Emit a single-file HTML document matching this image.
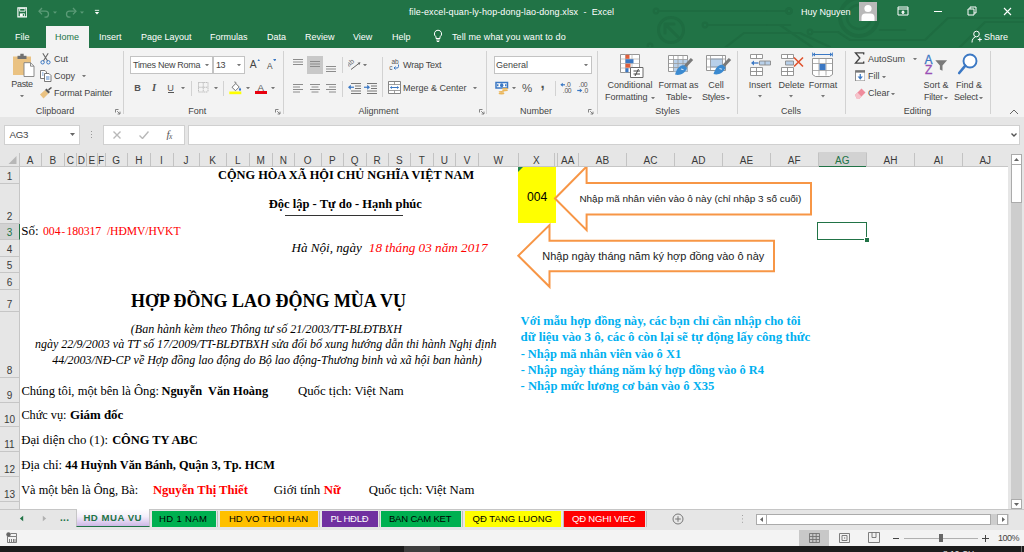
<!DOCTYPE html>
<html><head><meta charset="utf-8"><title>Excel</title>
<style>
html,body{margin:0;padding:0;}
body{width:1024px;height:552px;overflow:hidden;position:relative;background:#e6e6e6;font-family:"Liberation Sans",sans-serif;font-size:9px;color:#444;}
.a{position:absolute;}
.t{position:absolute;white-space:nowrap;line-height:1;}
.ui{font-family:"Liberation Sans",sans-serif;font-size:9px;color:#444;}
.w{color:#fff;}
.b{font-weight:bold;}
.i{font-style:italic;}
.ch{position:absolute;top:151px;height:16px;line-height:19.6px;text-align:center;font-size:10px;color:#444;font-family:"Liberation Sans",sans-serif;}
.cl{position:absolute;top:152.5px;height:14px;width:1px;background:#c3c3c3;}
.rh{position:absolute;left:0;width:19.5px;text-align:center;font-size:10px;color:#3a3a3a;border-bottom:1px solid #c6c6c6;box-sizing:border-box;}
.rh span{position:absolute;left:0;width:19px;bottom:-0.3px;line-height:12px;}
</style></head><body>

<!-- TITLE BAR -->
<div class="a" id="titlebar" style="left:0;top:0;width:1024px;height:47.500px;background:#217346;overflow:hidden;">
<svg class="a" style="left:0;top:0" width="1024" height="47" viewBox="0 0 1024 47">
 <g fill="none" stroke="#1e6c41" stroke-width="2.2" stroke-linecap="round" stroke-linejoin="round">
  <circle cx="656" cy="11" r="2.3"/><path d="M659 11H786"/><circle cx="789" cy="11" r="2.6"/>
  <circle cx="671" cy="30" r="12.5" stroke-width="3"/><path d="M678 37L665 24M665 33V24H674" stroke-width="3"/>
  <circle cx="705" cy="25" r="2.3"/><path d="M708 25H780L812 47"/>
  <path d="M722 50L744 33H800L830 47"/><circle cx="810" cy="32" r="2.3"/>
  <circle cx="650" cy="46" r="2.3"/>
  <circle cx="859" cy="17" r="19" stroke-width="4"/><circle cx="859" cy="17" r="12" stroke-width="2.5"/>
  <path d="M768 11H786"/><path d="M768 25H790"/><circle cx="789" cy="11" r="2.6"/>
  <path d="M812 32H838L850 40H925L948 18H1024"/>
  <path d="M960 47L985 22H1024"/>
  <path d="M880 30H905"/>
 </g>
</svg>
<!-- QAT -->
<svg class="a" style="left:16.500px;top:7.200px" width="10.700" height="10.700" viewBox="0 0 12 12"><path d="M1 1h10v10H1z" fill="none" stroke="#fff" stroke-width="1.3"/><path d="M3 1.5h6v3.2H3z" fill="none" stroke="#fff" stroke-width="1"/><path d="M3.2 7.2h5.6v3.5H3.2z" fill="#fff"/><path d="M6.5 8h1.4v2H6.500z" fill="#217346"/></svg>
<svg class="a" style="left:37px;top:6px" width="50" height="12" viewBox="0 0 50 12"><g fill="none" stroke="#5b9b77" stroke-width="1.3"><path d="M2 5.200h6.500a3 3 0 0 1 0 6H7.500"/><path d="M5 2L2 5.200L5 8.400"/><path d="M39 5.200h-6.500a3 3 0 0 0 0 6H33.500"/><path d="M36 2L39 5.200L36 8.400"/></g><path d="M16 5.500h4l-2 2.200z" fill="#5b9b77"/><path d="M43 5.500h4l-2 2.200z" fill="#5b9b77"/></svg>
<svg class="a" style="left:94.300px;top:9.200px" width="6" height="7" viewBox="0 0 7 8"><path d="M1 1.500h5" stroke="#fff" stroke-width="1"/><path d="M1 3.500h5L3.500 6.300z" fill="#fff"/></svg>
<div class="t w" style="left:409px;top:7.600px;font-size:9px;letter-spacing:0.1px;">file-excel-quan-ly-hop-dong-lao-dong.xlsx&nbsp; -&nbsp; Excel</div>
<div class="t w" style="left:801px;top:7.600px;font-size:9px;">Huy Nguyen</div>
<div class="a" style="left:859px;top:2px;width:18px;height:19px;background:#b9b9b9;overflow:hidden;"><svg width="18" height="19" viewBox="0 0 18 19"><circle cx="9" cy="6.500" r="3.600" fill="#fff"/><path d="M2.500 19v-3.500a4 4 0 0 1 4-4h5a4 4 0 0 1 4 4V19z" fill="#fff"/></svg></div>
<!-- window buttons -->
<svg class="a" style="left:897px;top:6px" width="12" height="10" viewBox="0 0 12 10"><path d="M1 1h10v8H1z" fill="none" stroke="#fff" stroke-width="1"/><path d="M1 3h10" stroke="#fff"/><path d="M6 4.300L8.200 6.500H6.800V8H5.200V6.500H3.800z" fill="#fff"/></svg>
<div class="a" style="left:934px;top:11px;width:8px;height:1px;background:#fff;"></div>
<svg class="a" style="left:967px;top:6px" width="10" height="10" viewBox="0 0 10 10"><path d="M1 3h6v6H1z" fill="none" stroke="#fff" stroke-width="1"/><path d="M3 3V1h6v6H7" fill="none" stroke="#fff" stroke-width="1"/></svg>
<svg class="a" style="left:1003px;top:7px" width="9" height="9" viewBox="0 0 9 9"><path d="M1 1l7 7M8 1l-7 7" stroke="#fff" stroke-width="1.100"/></svg>
<!-- tabs -->
<div class="a" style="left:46px;top:25.500px;width:43px;height:22.500px;background:#f3f3f3;"></div>
<div class="t w" style="left:15px;top:32.600px;font-size:9px;">File</div>
<div class="t" style="left:55px;top:32.600px;font-size:9px;color:#217346;">Home</div>
<div class="t w" style="left:99px;top:32.600px;font-size:9px;">Insert</div>
<div class="t w" style="left:141px;top:32.600px;font-size:9px;">Page Layout</div>
<div class="t w" style="left:210px;top:32.600px;font-size:9px;">Formulas</div>
<div class="t w" style="left:267px;top:32.600px;font-size:9px;">Data</div>
<div class="t w" style="left:305px;top:32.600px;font-size:9px;">Review</div>
<div class="t w" style="left:353px;top:32.600px;font-size:9px;">View</div>
<div class="t w" style="left:392px;top:32.600px;font-size:9px;">Help</div>
<svg class="a" style="left:433px;top:29px" width="10" height="14" viewBox="0 0 10 14"><path d="M5 1.200a3.600 3.600 0 0 1 2 6.600v1.700H3V7.800a3.600 3.600 0 0 1 2-6.600z" fill="none" stroke="#fff" stroke-width="1"/><path d="M3.300 11h3.400M3.800 12.500h2.400" stroke="#fff" stroke-width="1"/></svg>
<div class="t w" style="left:452px;top:32.600px;font-size:9px;letter-spacing:0.1px;">Tell me what you want to do</div>
<svg class="a" style="left:971px;top:30px" width="12" height="13" viewBox="0 0 12 13"><circle cx="5.500" cy="4" r="2.800" fill="none" stroke="#fff" stroke-width="1"/><path d="M1 12.500c0-3.500 1.700-5 3.300-5.400" fill="none" stroke="#fff" stroke-width="1"/><path d="M8.800 7.500v4M6.800 9.500h4" stroke="#fff" stroke-width="1"/></svg>
<div class="t w" style="left:984px;top:32.600px;font-size:9px;">Share</div>
</div>

<!-- RIBBON -->
<div class="a" id="ribbon" style="left:0;top:47.500px;width:1024px;height:70px;background:#f3f3f3;border-bottom:1px solid #d5d5d5;box-sizing:border-box;"></div>
<!--RIBBON-->
<svg class="a" style="left:12px;top:53px" width="24" height="26" viewBox="0 0 24 26">
<path d="M1 3.500h18v18.500h-18z" fill="#eac282"/>
<path d="M5.500 2.800h9v3.200h-9z" fill="#707070"/><path d="M8.300 0.800h3.400v2.500h-3.400z" fill="#707070"/>
<path d="M12 9.700h6.500l3.500 3.500v10.300h-10z" fill="#fff" stroke="#808080" stroke-width="0.900"/><path d="M18.500 9.700v3.500h3.500" fill="none" stroke="#808080" stroke-width="0.900"/>
</svg>
<div class="t ui" style="left:-28px;width:100px;text-align:center;top:80.40px;letter-spacing:-0.35px;">Paste</div>
<svg class="a" style="left:19.50px;top:95.10px" width="4" height="2.400" viewBox="0 0 4 2.400"><path d="M0 0h4L2 2.400z" fill="#777"/></svg>
<svg class="a" style="left:40px;top:53px" width="11" height="12" viewBox="0 0 11 12"><path d="M2.800 0.300L7.600 8M8.200 0.300L3.400 8" stroke="#666" stroke-width="1.100" fill="none"/><circle cx="2.600" cy="9.300" r="1.700" fill="none" stroke="#3b78c4" stroke-width="1"/><circle cx="8.400" cy="9.300" r="1.700" fill="none" stroke="#3b78c4" stroke-width="1"/></svg>
<div class="t ui" style="left:54px;top:54.90px;">Cut</div>
<svg class="a" style="left:40px;top:70px" width="12" height="12" viewBox="0 0 12 12"><path d="M0.500 0.500h4.500l1.500 1.500v6.500h-6z" fill="#fff" stroke="#6a6a6a" stroke-width="0.900"/><path d="M4.500 3.500h4.500l2 2v6h-6.500z" fill="#fff" stroke="#6a6a6a" stroke-width="0.900"/><path d="M6 7h3.500M6 9h3.500" stroke="#3b78c4" stroke-width="0.900"/><path d="M2 3h1.500M2 5h1.500" stroke="#3b78c4" stroke-width="0.800"/></svg>
<div class="t ui" style="left:54px;top:71.90px;">Copy</div>
<svg class="a" style="left:82.30px;top:75.10px" width="4" height="2.400" viewBox="0 0 4 2.400"><path d="M0 0h4L2 2.400z" fill="#777"/></svg>
<svg class="a" style="left:39px;top:87px" width="14" height="12" viewBox="0 0 14 12"><path d="M1 7.500L6 3l3.500 3.500-5 5z" fill="#eac282"/><path d="M6 3l1.500-1.500l3.500 3.500L9.500 6.500z" fill="#555"/><path d="M9.500 2.800L12.500 0.500" stroke="#555" stroke-width="1.500"/></svg>
<div class="t ui" style="left:54px;top:88.90px;letter-spacing:-0.1px;">Format Painter</div>
<div class="t ui" style="left:5px;width:100px;text-align:center;top:106.70px;">Clipboard</div>
<svg class="a" style="left:115px;top:108.5px" width="6" height="6" viewBox="0 0 6 6"><path d="M0.500 3.500V0.500H3.500" fill="none" stroke="#777" stroke-width="0.900"/><path d="M2.200 2.200L5 5M5 2.600V5H2.600" fill="none" stroke="#777" stroke-width="0.900"/></svg>
<div class="a" style="left:123.2px;top:51px;width:1px;height:63px;background:#d2d2d2;"></div>
<div class="a" style="left:130px;top:56.200px;width:82.500px;height:17.400px;background:#fff;border:1px solid #c3c3c3;box-sizing:border-box;"></div>
<div class="a" style="left:213px;top:56.200px;width:31.500px;height:17.400px;background:#fff;border:1px solid #c3c3c3;box-sizing:border-box;"></div>
<div class="t ui" style="left:133px;top:61.30px;letter-spacing:-0.28px;">Times New Roma</div>
<svg class="a" style="left:205.00px;top:63.60px" width="4" height="2.400" viewBox="0 0 4 2.400"><path d="M0 0h4L2 2.400z" fill="#777"/></svg>
<div class="t ui" style="left:216px;top:61.30px;letter-spacing:-0.5px;">13</div>
<svg class="a" style="left:237.40px;top:63.60px" width="4" height="2.400" viewBox="0 0 4 2.400"><path d="M0 0h4L2 2.400z" fill="#777"/></svg>
<div class="t ui" style="left:249.800px;top:59.800px;font-size:10.300px;">A</div><svg class="a" style="left:256.500px;top:58.500px" width="3.500" height="2.500" viewBox="0 0 4 3"><path d="M0 3h4L2 0z" fill="#3b78c4"/></svg>
<div class="t ui" style="left:267px;top:61.500px;font-size:8.300px;">A</div><svg class="a" style="left:272.800px;top:58.800px" width="3.500" height="2.500" viewBox="0 0 4 3"><path d="M0 0h4L2 3z" fill="#3b78c4"/></svg>
<div class="t ui b" style="left:134.300px;top:83.600px;font-size:9.200px;color:#555;">B</div>
<div class="t i" style="left:152px;top:83px;font-family:'Liberation Serif',serif;font-size:10.500px;color:#555;font-weight:bold;">I</div>
<div class="t ui" style="left:167.300px;top:83.600px;font-size:9.200px;color:#555;">U</div><div class="a" style="left:167.500px;top:91.800px;width:6px;height:1px;background:#555;"></div>
<svg class="a" style="left:181.20px;top:86.60px" width="4" height="2.400" viewBox="0 0 4 2.400"><path d="M0 0h4L2 2.400z" fill="#777"/></svg>
<div class="a" style="left:191px;top:80.5px;width:1px;height:15.299999999999997px;background:#d2d2d2;"></div>
<svg class="a" style="left:198px;top:82px" width="11" height="11" viewBox="0 0 11 11"><path d="M0.500 0.500h9.500M0.500 5.250h9.500M0.500 10h9.500M0.500 0.500v9.500M5.250 0.500v9.500M10 0.500v9.500" fill="none" stroke="#b0b0b0" stroke-width="0.900" stroke-dasharray="1.200 0.700"/></svg>
<svg class="a" style="left:213.60px;top:86.60px" width="4" height="2.400" viewBox="0 0 4 2.400"><path d="M0 0h4L2 2.400z" fill="#777"/></svg>
<div class="a" style="left:223px;top:80.5px;width:1px;height:15.299999999999997px;background:#d2d2d2;"></div>
<svg class="a" style="left:229px;top:80.500px" width="13" height="14" viewBox="0 0 13 14"><path d="M3 6.300L6.800 2.500L10.200 6L6.500 9.700z" fill="#fff" stroke="#666" stroke-width="0.900"/><path d="M5.300 1.200c0.800-0.800 1.800 0 1.500 1.300" stroke="#666" stroke-width="0.900" fill="none"/><path d="M11 6.500c0.800 1.200 1.100 1.700 1.100 2.200a1.100 1.100 0 0 1-2.200 0c0-0.500 0.300-1 1.100-2.200z" fill="#3b78c4"/><path d="M0.300 10.500h12v2.700h-12z" fill="#ffff00"/></svg>
<svg class="a" style="left:245.70px;top:86.60px" width="4" height="2.400" viewBox="0 0 4 2.400"><path d="M0 0h4L2 2.400z" fill="#777"/></svg>
<div class="t ui" style="left:257.500px;top:82.500px;font-size:9.700px;color:#555;">A</div><div class="a" style="left:255px;top:91px;width:12px;height:2.700px;background:#e8000e;"></div>
<svg class="a" style="left:271.20px;top:86.60px" width="4" height="2.400" viewBox="0 0 4 2.400"><path d="M0 0h4L2 2.400z" fill="#777"/></svg>
<div class="t ui" style="left:147.3px;width:100px;text-align:center;top:106.70px;">Font</div>
<svg class="a" style="left:275px;top:108.5px" width="6" height="6" viewBox="0 0 6 6"><path d="M0.500 3.500V0.500H3.500" fill="none" stroke="#777" stroke-width="0.900"/><path d="M2.200 2.200L5 5M5 2.600V5H2.600" fill="none" stroke="#777" stroke-width="0.900"/></svg>
<div class="a" style="left:283.2px;top:51px;width:1px;height:63px;background:#d2d2d2;"></div>
<svg class="a" style="left:293px;top:58.5px" width="10" height="8.5" viewBox="0 0 10 8.5"><path d="M0 0.5H10" stroke="#8c8c8c" stroke-width="1"/><path d="M0 3.0H10" stroke="#8c8c8c" stroke-width="1"/><path d="M0 5.5H10" stroke="#8c8c8c" stroke-width="1"/></svg>
<div class="a" style="left:306.500px;top:56px;width:16.500px;height:17.500px;background:#c8c8c8;"></div>
<svg class="a" style="left:310px;top:61px" width="10" height="8.5" viewBox="0 0 10 8.5"><path d="M0 0.5H10" stroke="#8c8c8c" stroke-width="1"/><path d="M0 3.0H10" stroke="#8c8c8c" stroke-width="1"/><path d="M0 5.5H10" stroke="#8c8c8c" stroke-width="1"/></svg>
<svg class="a" style="left:326px;top:65.5px" width="10" height="8.5" viewBox="0 0 10 8.5"><path d="M0 0.5H10" stroke="#8c8c8c" stroke-width="1"/><path d="M0 3.0H10" stroke="#8c8c8c" stroke-width="1"/><path d="M0 5.5H10" stroke="#8c8c8c" stroke-width="1"/></svg>
<div class="a" style="left:342px;top:57px;width:1px;height:16px;background:#d2d2d2;"></div>
<svg class="a" style="left:348px;top:58px" width="14" height="13" viewBox="0 0 14 13"><text x="0" y="7" font-family="Liberation Sans" font-size="7" fill="#666" transform="rotate(-40 3 7)">ab</text><path d="M3 11.500L11.500 5" stroke="#666" stroke-width="1"/><path d="M12.500 4.200l-3 0.500l1.800 2.200z" fill="#666"/></svg>
<svg class="a" style="left:363.00px;top:63.60px" width="4" height="2.400" viewBox="0 0 4 2.400"><path d="M0 0h4L2 2.400z" fill="#777"/></svg>
<div class="a" style="left:382px;top:57px;width:1px;height:40px;background:#d2d2d2;"></div>
<svg class="a" style="left:389px;top:58px" width="11" height="13" viewBox="0 0 11 13"><text x="2.500" y="5.500" font-family="Liberation Sans" font-size="6.500" fill="#555">ab</text><text x="0.300" y="11.500" font-family="Liberation Sans" font-size="6.500" fill="#555">c</text><path d="M9.500 6.500v2a1.500 1.500 0 0 1-1.500 1.500H5.500" fill="none" stroke="#3b78c4" stroke-width="1"/><path d="M6.500 8.500L5 10l1.500 1.500" fill="none" stroke="#3b78c4" stroke-width="1"/></svg>
<div class="t ui" style="left:403px;top:61.20px;letter-spacing:-0.2px;">Wrap Text</div>
<svg class="a" style="left:293px;top:83.5px" width="10" height="11.0" viewBox="0 0 10 11.0"><path d="M0 0.5H10" stroke="#8c8c8c" stroke-width="1"/><path d="M0 3.0H7" stroke="#8c8c8c" stroke-width="1"/><path d="M0 5.5H10" stroke="#8c8c8c" stroke-width="1"/><path d="M0 8.0H7" stroke="#8c8c8c" stroke-width="1"/></svg>
<svg class="a" style="left:310px;top:83.5px" width="10" height="11.0" viewBox="0 0 10 11.0"><path d="M0 0.5H10" stroke="#8c8c8c" stroke-width="1"/><path d="M1.5 3.0H8.5" stroke="#8c8c8c" stroke-width="1"/><path d="M0 5.5H10" stroke="#8c8c8c" stroke-width="1"/><path d="M1.5 8.0H8.5" stroke="#8c8c8c" stroke-width="1"/></svg>
<svg class="a" style="left:326px;top:83.5px" width="10" height="11.0" viewBox="0 0 10 11.0"><path d="M0 0.5H10" stroke="#8c8c8c" stroke-width="1"/><path d="M3 3.0H10" stroke="#8c8c8c" stroke-width="1"/><path d="M0 5.5H10" stroke="#8c8c8c" stroke-width="1"/><path d="M3 8.0H10" stroke="#8c8c8c" stroke-width="1"/></svg>
<div class="a" style="left:342px;top:81px;width:1px;height:16px;background:#d2d2d2;"></div>
<svg class="a" style="left:348px;top:82px" width="13" height="12" viewBox="0 0 13 12"><path d="M3 1.500h10M7 4h6M7 6.500h6M3 9h10M3 11.500h10" stroke="#777" stroke-width="1" fill="none"/><path d="M1 5.250h5" stroke="#3b78c4" stroke-width="1.200"/><path d="M0 5.250L2.800 2.800v4.900z" fill="#3b78c4"/></svg>
<svg class="a" style="left:364px;top:82px" width="13" height="12" viewBox="0 0 13 12"><path d="M3 1.500h10M7 4h6M7 6.500h6M3 9h10M3 11.500h10" stroke="#777" stroke-width="1" fill="none"/><path d="M0 5.250h5" stroke="#3b78c4" stroke-width="1.200"/><path d="M6 5.250L3.200 2.800v4.900z" fill="#3b78c4"/></svg>
<svg class="a" style="left:388px;top:81px" width="13" height="13" viewBox="0 0 13 13"><path d="M0.500 0.500h12v12h-12z" fill="#fff" stroke="#777" stroke-width="0.900"/><path d="M0.500 3.500h12M0.500 9.500h12M6.500 0.500v3M6.500 9.500v3" stroke="#888" stroke-width="0.800"/><path d="M2.500 6.500h8" stroke="#3b78c4" stroke-width="1"/><path d="M2 6.500l2-1.600v3.200zM11 6.500l-2-1.600v3.200z" fill="#3b78c4"/></svg>
<div class="t ui" style="left:403px;top:83.90px;">Merge &amp; Center</div>
<svg class="a" style="left:473.00px;top:86.80px" width="4" height="2.400" viewBox="0 0 4 2.400"><path d="M0 0h4L2 2.400z" fill="#777"/></svg>
<div class="t ui" style="left:328.5px;width:100px;text-align:center;top:106.70px;">Alignment</div>
<svg class="a" style="left:479px;top:108.5px" width="6" height="6" viewBox="0 0 6 6"><path d="M0.500 3.500V0.500H3.500" fill="none" stroke="#777" stroke-width="0.900"/><path d="M2.200 2.200L5 5M5 2.600V5H2.600" fill="none" stroke="#777" stroke-width="0.900"/></svg>
<div class="a" style="left:486.2px;top:51px;width:1px;height:63px;background:#d2d2d2;"></div>
<div class="a" style="left:493.500px;top:56.200px;width:98px;height:17.400px;background:#fff;border:1px solid #c3c3c3;box-sizing:border-box;"></div>
<div class="t ui" style="left:496px;top:61.30px;">General</div>
<svg class="a" style="left:583.50px;top:63.60px" width="4" height="2.400" viewBox="0 0 4 2.400"><path d="M0 0h4L2 2.400z" fill="#777"/></svg>
<svg class="a" style="left:495px;top:81px" width="14" height="14" viewBox="0 0 14 14"><path d="M1 1.500h11.500v5.500h-11.500z" fill="#fff" stroke="#3b78c4" stroke-width="1.500"/><ellipse cx="6.700" cy="4.200" rx="1.700" ry="2" fill="#3b78c4"/><path d="M2 3.200h1.500v2h-1.500zM10 3.200h1.500v2h-1.500z" fill="#3b78c4"/><ellipse cx="10" cy="7.700" rx="3" ry="0.900" fill="#eab65a"/><ellipse cx="10" cy="9.300" rx="3" ry="0.900" fill="#eab65a"/><ellipse cx="6.500" cy="10.800" rx="3" ry="0.900" fill="#eab65a"/><ellipse cx="6.500" cy="12.500" rx="3" ry="0.900" fill="#eab65a"/></svg>
<svg class="a" style="left:512.00px;top:86.80px" width="4" height="2.400" viewBox="0 0 4 2.400"><path d="M0 0h4L2 2.400z" fill="#777"/></svg>
<div class="t ui" style="left:522px;top:82.500px;font-size:11.500px;color:#555;">%</div>
<div class="t ui b" style="left:540.500px;top:75px;font-size:15px;color:#555;">,</div>
<div class="a" style="left:555px;top:81px;width:1px;height:15px;background:#d2d2d2;"></div>
<svg class="a" style="left:559px;top:81px" width="14" height="14" viewBox="0 0 14 14"><path d="M2.500 3.800h3.500" stroke="#3b78c4" stroke-width="1.200"/><path d="M1.300 3.800L3.800 1.800v4z" fill="#3b78c4"/><text x="6.200" y="6.300" font-family="Liberation Sans" font-size="6.800" fill="#555">.0</text><text x="3.800" y="11.800" font-family="Liberation Sans" font-size="6.800" fill="#555" letter-spacing="-0.300">.00</text></svg>
<svg class="a" style="left:577px;top:81px" width="14" height="14" viewBox="0 0 14 14"><text x="1.800" y="6.300" font-family="Liberation Sans" font-size="6.800" fill="#555" letter-spacing="-0.300">.00</text><path d="M0.200 9.500h3.500" stroke="#3b78c4" stroke-width="1.200"/><path d="M5.300 9.500L2.800 7.500v4z" fill="#3b78c4"/><text x="5.500" y="11.800" font-family="Liberation Sans" font-size="6.800" fill="#555">.0</text></svg>
<div class="t ui" style="left:486px;width:100px;text-align:center;top:106.70px;">Number</div>
<svg class="a" style="left:588px;top:108.5px" width="6" height="6" viewBox="0 0 6 6"><path d="M0.500 3.500V0.500H3.500" fill="none" stroke="#777" stroke-width="0.900"/><path d="M2.200 2.200L5 5M5 2.600V5H2.600" fill="none" stroke="#777" stroke-width="0.900"/></svg>
<div class="a" style="left:597.2px;top:51px;width:1px;height:63px;background:#d2d2d2;"></div>
<svg class="a" style="left:620px;top:54px" width="24" height="24" viewBox="0 0 24 24"><path d="M0.500 0.500h19v18h-19z" fill="#fff" stroke="#8a8a8a" stroke-width="0.900"/><path d="M0.500 5h19M0.500 9.500h19M0.500 14h19M5.500 0.500v18M12 0.500v18" stroke="#b5b5b5" stroke-width="0.800"/><path d="M5.500 0.800h4v4h-4z" fill="#e0603c"/><path d="M5.500 5.200h8v4h-8z" fill="#3b78c4"/><path d="M5.500 9.700h5v4h-5z" fill="#e0603c"/><path d="M5.500 14.200h3v4h-3z" fill="#3b78c4"/><path d="M10.500 13.500h12.500v10h-12.500z" fill="#fff" stroke="#6a6a6a" stroke-width="1"/><path d="M13.500 17h6.500M13.500 20h6.500M18.500 15l-3.500 7" stroke="#444" stroke-width="1" fill="none"/></svg>
<div class="t ui" style="left:580px;width:100px;text-align:center;top:80.70px;">Conditional</div>
<div class="t ui" style="left:605px;top:93.00px;letter-spacing:-0.05px;">Formatting</div>
<svg class="a" style="left:651.00px;top:96.60px" width="4" height="2.400" viewBox="0 0 4 2.400"><path d="M0 0h4L2 2.400z" fill="#777"/></svg>
<svg class="a" style="left:668px;top:54px" width="26" height="24" viewBox="0 0 26 24"><path d="M0.500 1.500h19v16h-19z" fill="#fff" stroke="#8a8a8a" stroke-width="0.900"/><path d="M5.500 5.500h14v12h-14z" fill="#b8d0ea"/><path d="M0.500 5.500h19M0.500 9.500h19M0.500 13.500h19M5.500 1.500v16M10 1.500v16M15 1.500v16" stroke="#9a9a9a" stroke-width="0.800"/><path d="M24 5L17 12.500" stroke="#7a7a7a" stroke-width="3.200"/><path d="M16.500 11.500c-3.500-1.500-7.500 2-9.500 9c4 1.500 10-0.500 12-6.500z" fill="#3b8ad0"/><path d="M13 15l2.500 0.800" stroke="#cfe3f6" stroke-width="1.200"/></svg>
<div class="t ui" style="left:628.5px;width:100px;text-align:center;top:80.70px;letter-spacing:-0.05px;">Format as</div>
<div class="t ui" style="left:666px;top:93.00px;">Table</div>
<svg class="a" style="left:688.00px;top:96.60px" width="4" height="2.400" viewBox="0 0 4 2.400"><path d="M0 0h4L2 2.400z" fill="#777"/></svg>
<svg class="a" style="left:706px;top:54px" width="26" height="24" viewBox="0 0 26 24"><path d="M0.500 1.500h19v15h-19z" fill="#fff" stroke="#8a8a8a" stroke-width="0.900"/><path d="M4.500 5h12v8h-12z" fill="#b8d0ea" stroke="#8aaace" stroke-width="0.800"/><path d="M0.500 5h19M0.500 13h19M4.500 1.500v15M16.500 1.500v15" stroke="#9a9a9a" stroke-width="0.800"/><path d="M24 5L17.500 12" stroke="#7a7a7a" stroke-width="3.200"/><path d="M17 11c-3.500-1.500-7.500 2-9.500 9c4 1.500 10-0.500 12-6.500z" fill="#3b8ad0"/><path d="M13.500 14.500l2.500 0.800" stroke="#cfe3f6" stroke-width="1.200"/></svg>
<div class="t ui" style="left:666px;width:100px;text-align:center;top:80.70px;">Cell</div>
<div class="t ui" style="left:702px;top:93.00px;letter-spacing:-0.3px;">Styles</div>
<svg class="a" style="left:726.00px;top:96.60px" width="4" height="2.400" viewBox="0 0 4 2.400"><path d="M0 0h4L2 2.400z" fill="#777"/></svg>
<div class="t ui" style="left:617.5px;width:100px;text-align:center;top:106.70px;">Styles</div>
<div class="a" style="left:737.2px;top:51px;width:1px;height:63px;background:#d2d2d2;"></div>
<svg class="a" style="left:750px;top:54px" width="22" height="23" viewBox="0 0 22 23"><path d="M0.500 0.500h12v4h-12zM6.500 0.500v4" fill="#fff" stroke="#8a8a8a" stroke-width="0.900"/><path d="M0.500 13.500h12v8h-12zM6.500 13.500v8M0.500 17.500h12" fill="#fff" stroke="#8a8a8a" stroke-width="0.900"/><path d="M9.500 7h11v4h-11z" fill="#b8d0ea" stroke="#8a8a8a" stroke-width="0.900"/><path d="M15 7v4" stroke="#8a8a8a" stroke-width="0.900"/><path d="M3 9h5.500" stroke="#3b78c4" stroke-width="1.300"/><path d="M1 9l3-2.500v5z" fill="#3b78c4"/></svg>
<div class="t ui" style="left:710px;width:100px;text-align:center;top:80.70px;">Insert</div>
<svg class="a" style="left:757.50px;top:95.30px" width="4" height="2.400" viewBox="0 0 4 2.400"><path d="M0 0h4L2 2.400z" fill="#777"/></svg>
<svg class="a" style="left:781px;top:54px" width="24" height="23" viewBox="0 0 24 23"><path d="M0.500 0.500h12v4h-12zM6.500 0.500v4" fill="#fff" stroke="#8a8a8a" stroke-width="0.900"/><path d="M0.500 13.500h12v8h-12zM6.500 13.500v8M0.500 17.500h12" fill="#fff" stroke="#8a8a8a" stroke-width="0.900"/><path d="M4.500 7h8v4h-8z" fill="#b8d0ea" stroke="#8a8a8a" stroke-width="0.900"/><path d="M13 3.500l9 9M22 3.500l-9 9" stroke="#e0532e" stroke-width="1.600"/></svg>
<div class="t ui" style="left:741.5px;width:100px;text-align:center;top:80.70px;">Delete</div>
<svg class="a" style="left:789.00px;top:95.30px" width="4" height="2.400" viewBox="0 0 4 2.400"><path d="M0 0h4L2 2.400z" fill="#777"/></svg>
<svg class="a" style="left:811px;top:52px" width="24" height="26" viewBox="0 0 24 26"><path d="M2 2.500h19" stroke="#3b78c4" stroke-width="1"/><path d="M1.500 2.500l2.500-2v4zM21.500 2.500l-2.500-2v4z" fill="#3b78c4"/><path d="M1.500 0.500v4M21.500 0.500v4" stroke="#3b78c4" stroke-width="0.800"/><path d="M1.500 6.500h20v16l-3 2h-14l-3-2z" fill="#fff" stroke="#8a8a8a" stroke-width="0.900"/><path d="M8 6.500v17M15 6.500v17M1.500 11.500h20M1.500 18.500h20" stroke="#9a9a9a" stroke-width="0.800"/><path d="M8.500 12h6v6h-6z" fill="#3b78c4"/></svg>
<div class="t ui" style="left:773px;width:100px;text-align:center;top:80.70px;">Format</div>
<svg class="a" style="left:821.00px;top:95.30px" width="4" height="2.400" viewBox="0 0 4 2.400"><path d="M0 0h4L2 2.400z" fill="#777"/></svg>
<div class="t ui" style="left:741px;width:100px;text-align:center;top:106.70px;">Cells</div>
<div class="a" style="left:845.2px;top:51px;width:1px;height:63px;background:#d2d2d2;"></div>
<svg class="a" style="left:853.800px;top:52.300px" width="10.800" height="12" viewBox="0 0 12 14"><path d="M11 3V1H1.500l5 6l-5 6H11v-2" fill="none" stroke="#444" stroke-width="1.600"/></svg>
<div class="t ui" style="left:868px;top:54.90px;">AutoSum</div>
<svg class="a" style="left:913.00px;top:58.10px" width="4" height="2.400" viewBox="0 0 4 2.400"><path d="M0 0h4L2 2.400z" fill="#777"/></svg>
<svg class="a" style="left:854.500px;top:70px" width="10.500" height="11.400" viewBox="0 0 12 13"><path d="M0.500 0.500h11v12h-11z" fill="#fff" stroke="#777" stroke-width="1"/><path d="M0.500 1h11v2h-11z" fill="#777"/><path d="M6 4.500v5" stroke="#3b78c4" stroke-width="1.400"/><path d="M6 11L3 7.500h6z" fill="#3b78c4"/></svg>
<div class="t ui" style="left:868px;top:71.90px;">Fill</div>
<svg class="a" style="left:882.00px;top:75.80px" width="4" height="2.400" viewBox="0 0 4 2.400"><path d="M0 0h4L2 2.400z" fill="#777"/></svg>
<svg class="a" style="left:854px;top:87px" width="13" height="12" viewBox="0 0 13 12"><path d="M1 8l6.500-6.500l4 4L5 12H3z" fill="#ef8b9c"/><path d="M1 8l2.500-2.500l4 4L5 12H3z" fill="#f6c3cb"/></svg>
<div class="t ui" style="left:868px;top:88.90px;">Clear</div>
<svg class="a" style="left:891.00px;top:92.80px" width="4" height="2.400" viewBox="0 0 4 2.400"><path d="M0 0h4L2 2.400z" fill="#777"/></svg>
<svg class="a" style="left:924px;top:53px" width="26" height="25" viewBox="0 0 26 25"><text x="0.500" y="10.700" font-family="Liberation Sans" font-size="12" fill="#3b78c4" stroke="#3b78c4" stroke-width="0.300">A</text><text x="1" y="21" font-family="Liberation Sans" font-size="12" fill="#9a4fb5" stroke="#9a4fb5" stroke-width="0.300">Z</text><path d="M11.300 7.200h11.800l-4.600 5.300v5.300l-2.600-1.300v-4z" fill="#7a7a7a"/></svg>
<div class="t ui" style="left:886px;width:100px;text-align:center;top:80.70px;">Sort &amp;</div>
<div class="t ui" style="left:924px;top:93.00px;letter-spacing:-0.2px;">Filter</div>
<svg class="a" style="left:944.00px;top:96.60px" width="4" height="2.400" viewBox="0 0 4 2.400"><path d="M0 0h4L2 2.400z" fill="#777"/></svg>
<svg class="a" style="left:957px;top:53px" width="26" height="25" viewBox="0 0 26 25"><circle cx="13" cy="8" r="6.500" fill="#fff" stroke="#3b78c4" stroke-width="1.900"/><path d="M8.300 12.700L2.200 20" stroke="#3b78c4" stroke-width="2.600" stroke-linecap="round"/></svg>
<div class="t ui" style="left:919px;width:100px;text-align:center;top:80.70px;">Find &amp;</div>
<div class="t ui" style="left:954px;top:93.00px;letter-spacing:-0.2px;">Select</div>
<svg class="a" style="left:978.50px;top:96.60px" width="4" height="2.400" viewBox="0 0 4 2.400"><path d="M0 0h4L2 2.400z" fill="#777"/></svg>
<div class="t ui" style="left:867.5px;width:100px;text-align:center;top:106.70px;">Editing</div>
<div class="a" style="left:990px;top:51px;width:1px;height:63px;background:#d2d2d2;"></div>
<svg class="a" style="left:1009px;top:109px" width="10" height="6" viewBox="0 0 10 6"><path d="M1 5L5 1l4 4" fill="none" stroke="#666" stroke-width="1"/></svg>
<!--/RIBBON-->

<!-- FORMULA BAR -->
<div class="a" id="fbar" style="left:0;top:117px;width:1024px;height:34px;background:#e6e6e6;"></div>
<div class="a" style="left:4px;top:125px;width:76px;height:19.500px;background:#fff;border:1px solid #d0d0d0;box-sizing:border-box;"></div>
<div class="t ui" style="left:9.500px;top:130px;font-size:9.700px;letter-spacing:-0.2px;">AG3</div>
<svg class="a" style="left:69.500px;top:133px" width="5" height="3" viewBox="0 0 5 3"><path d="M0 0h5L2.500 3z" fill="#666"/></svg>
<div class="a" style="left:91px;top:131.200px;width:1px;height:1px;background:#999;box-shadow:0 3px 0 #999,0 6px 0 #999;"></div>
<div class="a" style="left:103px;top:125px;width:82px;height:19.500px;background:#fff;border:1px solid #d0d0d0;box-sizing:border-box;"></div>
<svg class="a" style="left:113px;top:131px" width="8" height="8" viewBox="0 0 8 8"><path d="M0.500 0.500l7 7M7.500 0.500l-7 7" stroke="#b8b8b8" stroke-width="1.400"/></svg>
<svg class="a" style="left:139px;top:131px" width="10" height="8" viewBox="0 0 10 8"><path d="M0.500 4.500L3.500 7.500L9.500 0.500" stroke="#b8b8b8" stroke-width="1.400" fill="none"/></svg>
<div class="t i" style="left:166.500px;top:128.500px;font-family:'Liberation Serif',serif;font-size:11px;color:#555;">f<span style="font-size:7.500px;position:relative;top:1px;left:-0.500px;">x</span></div>
<div class="a" style="left:187.500px;top:125px;width:832px;height:19.500px;background:#fff;border:1px solid #d0d0d0;box-sizing:border-box;"></div>
<svg class="a" style="left:1011px;top:132.800px" width="6" height="4" viewBox="0 0 6 4"><path d="M0.500 0.500L3 3L5.500 0.500" fill="none" stroke="#555" stroke-width="1.400"/></svg>

<!-- GRID -->
<!--GRID-->
<div class="a" id="grid" style="left:0;top:151px;width:1008px;height:357.500px;background:#fff;"></div>
<div class="a" id="colhead" style="left:0;top:151px;width:1008px;height:16px;background:#e6e6e6;border-bottom:1px solid #c6c6c6;box-sizing:border-box;"></div>
<div class="a" style="left:818px;top:152px;width:48.500px;height:15px;background:#d2d2d2;border-bottom:1.500px solid #217346;box-sizing:border-box;"></div>
<div class="ch" style="left:19px;width:22px;color:#3a3a3a;">A</div>
<div class="cl" style="left:40.5px;"></div>
<div class="ch" style="left:41px;width:23.5px;color:#3a3a3a;">B</div>
<div class="cl" style="left:64.0px;"></div>
<div class="ch" style="left:64.5px;width:11.5px;color:#3a3a3a;">C</div>
<div class="cl" style="left:75.5px;"></div>
<div class="ch" style="left:76px;width:10.5px;color:#3a3a3a;">D</div>
<div class="cl" style="left:86.0px;"></div>
<div class="ch" style="left:86.5px;width:10.5px;color:#3a3a3a;">E</div>
<div class="cl" style="left:96.5px;"></div>
<div class="ch" style="left:97px;width:8px;color:#3a3a3a;">F</div>
<div class="cl" style="left:104.5px;"></div>
<div class="ch" style="left:105px;width:22.5px;color:#3a3a3a;">G</div>
<div class="cl" style="left:127.0px;"></div>
<div class="ch" style="left:127.5px;width:22.5px;color:#3a3a3a;">H</div>
<div class="cl" style="left:149.5px;"></div>
<div class="ch" style="left:150px;width:23px;color:#3a3a3a;">I</div>
<div class="cl" style="left:172.5px;"></div>
<div class="ch" style="left:173px;width:26px;color:#3a3a3a;">J</div>
<div class="cl" style="left:198.5px;"></div>
<div class="ch" style="left:199px;width:27px;color:#3a3a3a;">K</div>
<div class="cl" style="left:225.5px;"></div>
<div class="ch" style="left:226px;width:23.5px;color:#3a3a3a;">L</div>
<div class="cl" style="left:249.0px;"></div>
<div class="ch" style="left:249.5px;width:22.5px;color:#3a3a3a;">M</div>
<div class="cl" style="left:271.5px;"></div>
<div class="ch" style="left:272px;width:22.5px;color:#3a3a3a;">N</div>
<div class="cl" style="left:294.0px;"></div>
<div class="ch" style="left:294.5px;width:26.5px;color:#3a3a3a;">O</div>
<div class="cl" style="left:320.5px;"></div>
<div class="ch" style="left:321px;width:22.5px;color:#3a3a3a;">P</div>
<div class="cl" style="left:343.0px;"></div>
<div class="ch" style="left:343.5px;width:22.5px;color:#3a3a3a;">Q</div>
<div class="cl" style="left:365.5px;"></div>
<div class="ch" style="left:366px;width:22px;color:#3a3a3a;">R</div>
<div class="cl" style="left:387.5px;"></div>
<div class="ch" style="left:388px;width:22.5px;color:#3a3a3a;">S</div>
<div class="cl" style="left:410.0px;"></div>
<div class="ch" style="left:410.5px;width:22.5px;color:#3a3a3a;">T</div>
<div class="cl" style="left:432.5px;"></div>
<div class="ch" style="left:433px;width:22.5px;color:#3a3a3a;">U</div>
<div class="cl" style="left:455.0px;"></div>
<div class="ch" style="left:455.5px;width:23.0px;color:#3a3a3a;">V</div>
<div class="cl" style="left:478.0px;"></div>
<div class="ch" style="left:478.5px;width:39.5px;color:#3a3a3a;">W</div>
<div class="cl" style="left:517.5px;"></div>
<div class="ch" style="left:518px;width:36.5px;color:#3a3a3a;">X</div>
<div class="cl" style="left:554.0px;"></div>
<div class="ch" style="left:557px;width:21.5px;color:#3a3a3a;">AA</div>
<div class="cl" style="left:578.0px;"></div>
<div class="ch" style="left:578.5px;width:48.0px;color:#3a3a3a;">AB</div>
<div class="cl" style="left:626.0px;"></div>
<div class="ch" style="left:626.5px;width:48.0px;color:#3a3a3a;">AC</div>
<div class="cl" style="left:674.0px;"></div>
<div class="ch" style="left:674.5px;width:48.0px;color:#3a3a3a;">AD</div>
<div class="cl" style="left:722.0px;"></div>
<div class="ch" style="left:722.5px;width:48.0px;color:#3a3a3a;">AE</div>
<div class="cl" style="left:770.0px;"></div>
<div class="ch" style="left:770.5px;width:47.5px;color:#3a3a3a;">AF</div>
<div class="cl" style="left:817.5px;"></div>
<div class="ch" style="left:818px;width:48.5px;color:#217346;">AG</div>
<div class="cl" style="left:866.0px;"></div>
<div class="ch" style="left:866.5px;width:48.0px;color:#3a3a3a;">AH</div>
<div class="cl" style="left:914.0px;"></div>
<div class="ch" style="left:914.5px;width:48.0px;color:#3a3a3a;">AI</div>
<div class="cl" style="left:962.0px;"></div>
<div class="ch" style="left:962.5px;width:45.5px;color:#3a3a3a;">AJ</div>
<div class="cl" style="left:556.500px;"></div>
<div class="cl" style="left:19px;"></div>
<svg class="a" style="left:8px;top:155.500px" width="8.500" height="8.500" viewBox="0 0 10 10"><path d="M10 0v10H0z" fill="#b7b7b7"/></svg>
<div class="a" id="rowhead" style="left:0;top:167px;width:20px;height:341.500px;background:#e6e6e6;border-right:1px solid #c6c6c6;box-sizing:border-box;"></div>
<div class="rh" style="top:167px;height:17px;"><span>1</span></div>
<div class="rh" style="top:184px;height:39.5px;"><span>2</span></div>
<div class="rh" style="top:223.5px;height:16.5px;background:#d2d2d2;color:#217346;border-right:1.500px solid #217346;width:20px;"><span>3</span></div>
<div class="rh" style="top:240px;height:16.5px;"><span>4</span></div>
<div class="rh" style="top:256.5px;height:16.5px;"><span>5</span></div>
<div class="rh" style="top:273px;height:16.5px;"><span>6</span></div>
<div class="rh" style="top:289.5px;height:22.5px;"><span>7</span></div>
<div class="rh" style="top:312px;height:66px;"><span>8</span></div>
<div class="rh" style="top:378px;height:24.5px;"><span>9</span></div>
<div class="rh" style="top:402.5px;height:24.5px;"><span>10</span></div>
<div class="rh" style="top:427px;height:24.5px;"><span>11</span></div>
<div class="rh" style="top:451.5px;height:25.0px;"><span>12</span></div>
<div class="rh" style="top:476.5px;height:25.5px;"><span>13</span></div>
<div class="a" style="left:518px;top:167px;width:37.500px;height:55.800px;background:#ffff00;"></div>
<svg class="a" style="left:518px;top:167px" width="5" height="5" viewBox="0 0 5 5"><path d="M0 0h5L0 5z" fill="#1e8449"/></svg>
<div class="a" style="left:817px;top:221.800px;width:50.400px;height:18.600px;border:1.800px solid #217346;box-sizing:border-box;"></div>
<div class="a" style="left:863.800px;top:236.800px;width:3.800px;height:3.800px;background:#217346;border:0.600px solid #fff;"></div>
<svg class="a" style="left:510px;top:167px" width="320" height="128" viewBox="510 167 320 128">
<path d="M555 198.500L586.600 166.500V183.100H811V214.400H586.600V230.200z" fill="#fff" stroke="#f79646" stroke-width="2" stroke-linejoin="miter"/>
<path d="M518.300 255.700L549.500 225.100V240.700H774V271.200H549.500V286.800z" fill="#fff" stroke="#f79646" stroke-width="2" stroke-linejoin="miter"/>
</svg>
<div class="a" style="left:285px;top:215px;width:117.500px;height:1px;background:#333;"></div>
<div class="t" style="left:218.03px;top:169px;font-family:'Liberation Serif',serif;font-size:12.37px;color:#000;letter-spacing:0.0px;font-weight:bold;">CỘNG HÒA XÃ HỘI CHỦ NGHĨA VIỆT NAM</div>
<div class="t" style="left:268.72px;top:198px;font-family:'Liberation Serif',serif;font-size:12.54px;color:#000;letter-spacing:0.0px;font-weight:bold;">Độc lập - Tự do - Hạnh phúc</div>
<div class="t" style="left:21.21px;top:224px;font-family:'Liberation Serif',serif;font-size:13px;color:#000;letter-spacing:0.054px;">Số:</div>
<div class="t" style="left:42.95px;top:226px;font-family:'Liberation Serif',serif;font-size:11.8px;color:#f00;letter-spacing:-0.005px;">004</div>
<div class="t" style="left:61.57px;top:226px;font-family:'Liberation Serif',serif;font-size:11px;color:#f00;letter-spacing:-0.214px;">-</div>
<div class="t" style="left:66.45px;top:226px;font-family:'Liberation Serif',serif;font-size:11.8px;color:#f00;letter-spacing:-0.122px;">180317</div>
<div class="t" style="left:106.95px;top:226px;font-family:'Liberation Serif',serif;font-size:11.6px;color:#f00;letter-spacing:-0.059px;">/HĐMV/HVKT</div>
<div class="t" style="left:291.41px;top:241px;font-family:'Liberation Serif',serif;font-size:13.14px;color:#000;letter-spacing:0.0px;font-style:italic;">Hà Nội, ngày</div>
<div class="t" style="left:368.80px;top:241px;font-family:'Liberation Serif',serif;font-size:13.2px;color:#f00;letter-spacing:0.0px;font-style:italic;">18 tháng 03 năm 2017</div>
<div class="t" style="left:131.06px;top:292px;font-family:'Liberation Serif',serif;font-size:17.99px;color:#000;letter-spacing:0.0px;font-weight:bold;">HỢP ĐỒNG LAO ĐỘNG MÙA VỤ</div>
<div class="t" style="left:130.84px;top:323px;font-family:'Liberation Serif',serif;font-size:11.99px;color:#000;letter-spacing:0.0px;font-style:italic;">(Ban hành kèm theo Thông tư số 21/2003/TT-BLĐTBXH</div>
<div class="t" style="left:34.94px;top:338px;font-family:'Liberation Serif',serif;font-size:11.99px;color:#000;letter-spacing:0.0px;font-style:italic;">ngày 22/9/2003 và TT số 17/2009/TT-BLĐTBXH sửa đổi bổ xung hướng dẫn thi hành Nghị định</div>
<div class="t" style="left:52.24px;top:354px;font-family:'Liberation Serif',serif;font-size:11.99px;color:#000;letter-spacing:0.0px;font-style:italic;">44/2003/NĐ-CP về Hợp đồng lao động do Bộ lao động-Thương binh và xã hội ban hành)</div>
<div class="t" style="left:21.42px;top:385px;font-family:'Liberation Serif',serif;font-size:12.59px;color:#000;letter-spacing:0.0px;">Chúng tôi, một bên là Ông:</div>
<div class="t" style="left:161.53px;top:385px;font-family:'Liberation Serif',serif;font-size:12.36px;color:#000;letter-spacing:0.0px;font-weight:bold;">Nguyễn&nbsp; Văn Hoàng</div>
<div class="t" style="left:298.02px;top:385px;font-family:'Liberation Serif',serif;font-size:12.78px;color:#000;letter-spacing:0.0px;">Quốc tịch: Việt Nam</div>
<div class="t" style="left:21.43px;top:409px;font-family:'Liberation Serif',serif;font-size:12.3px;color:#000;letter-spacing:-0.037px;">Chức vụ:</div>
<div class="t" style="left:69.91px;top:409px;font-family:'Liberation Serif',serif;font-size:12.89px;color:#000;letter-spacing:0.0px;font-weight:bold;">Giám đốc</div>
<div class="t" style="left:21.22px;top:434px;font-family:'Liberation Serif',serif;font-size:12.76px;color:#000;letter-spacing:0.0px;">Đại diện cho (1):</div>
<div class="t" style="left:112.13px;top:434px;font-family:'Liberation Serif',serif;font-size:12.41px;color:#000;letter-spacing:0.0px;font-weight:bold;">CÔNG TY ABC</div>
<div class="t" style="left:21.22px;top:459px;font-family:'Liberation Serif',serif;font-size:12.82px;color:#000;letter-spacing:0.0px;">Địa chỉ:</div>
<div class="t" style="left:65.23px;top:459px;font-family:'Liberation Serif',serif;font-size:12.32px;color:#000;letter-spacing:0.0px;font-weight:bold;">44 Huỳnh Văn Bánh, Quận 3, Tp. HCM</div>
<div class="t" style="left:21.23px;top:484px;font-family:'Liberation Serif',serif;font-size:12.32px;color:#000;letter-spacing:0.0px;">Và một bên là Ông, Bà:</div>
<div class="t" style="left:152.92px;top:484px;font-family:'Liberation Serif',serif;font-size:12.64px;color:#f00;letter-spacing:0.0px;font-weight:bold;">Nguyễn Thị Thiết</div>
<div class="t" style="left:273.82px;top:484px;font-family:'Liberation Serif',serif;font-size:12.83px;color:#000;letter-spacing:0.0px;">Giới tính</div>
<div class="t" style="left:323.71px;top:484px;font-family:'Liberation Serif',serif;font-size:12.89px;color:#f00;letter-spacing:0.0px;font-weight:bold;">Nữ</div>
<div class="t" style="left:368.72px;top:484px;font-family:'Liberation Serif',serif;font-size:12.76px;color:#000;letter-spacing:0.0px;">Quốc tịch: Việt Nam</div>
<div class="t" style="left:520.62px;top:315px;font-family:'Liberation Serif',serif;font-size:12.57px;color:#00b0f0;letter-spacing:0.0px;font-weight:bold;">Với mẫu hợp đồng này, các bạn chỉ cần nhập cho tôi</div>
<div class="t" style="left:520.61px;top:331px;font-family:'Liberation Serif',serif;font-size:12.89px;color:#00b0f0;letter-spacing:0.0px;font-weight:bold;">dữ liệu vào 3 ô, các ô còn lại sẽ tự động lấy công thức</div>
<div class="t" style="left:520.63px;top:348px;font-family:'Liberation Serif',serif;font-size:12.43px;color:#00b0f0;letter-spacing:0.0px;font-weight:bold;">- Nhập mã nhân viên vào ô X1</div>
<div class="t" style="left:520.63px;top:364px;font-family:'Liberation Serif',serif;font-size:12.42px;color:#00b0f0;letter-spacing:0.0px;font-weight:bold;">- Nhập ngày tháng năm ký hợp đồng vào ô R4</div>
<div class="t" style="left:520.62px;top:380px;font-family:'Liberation Serif',serif;font-size:12.62px;color:#00b0f0;letter-spacing:0.0px;font-weight:bold;">- Nhập mức lương cơ bản vào ô X35</div>
<div class="t" style="left:526.93px;top:191px;font-family:'Liberation Sans',sans-serif;font-size:12.17px;color:#000;letter-spacing:0.0px;">004</div>
<div class="t" style="left:579.40px;top:194px;font-family:'Liberation Sans',sans-serif;font-size:9.96px;color:#1a1a1a;letter-spacing:0.0px;">Nhập mã nhân viên vào ô này (chỉ nhập 3 số cuối)</div>
<div class="t" style="left:542.37px;top:251px;font-family:'Liberation Sans',sans-serif;font-size:10.94px;color:#1a1a1a;letter-spacing:0.0px;">Nhập ngày tháng năm ký hợp đồng vào ô này</div>
<div class="a" style="left:1008px;top:151px;width:16px;height:357.500px;background:#e6e6e6;"></div>
<div class="a" style="left:1010.500px;top:164px;width:11px;height:335px;background:#cdcdcd;"></div>
<div class="a" style="left:1010.500px;top:154px;width:11px;height:10.500px;background:#fff;border:1px solid #ababab;box-sizing:border-box;"></div>
<svg class="a" style="left:1013.500px;top:157.500px" width="5" height="3" viewBox="0 0 5 3"><path d="M0 3h5L2.500 0z" fill="#666"/></svg>
<div class="a" style="left:1010.500px;top:164px;width:11px;height:39px;background:#fff;border:1px solid #ababab;box-sizing:border-box;"></div>
<div class="a" style="left:1010.500px;top:498.500px;width:11px;height:10px;background:#fff;border:1px solid #ababab;box-sizing:border-box;"></div>
<svg class="a" style="left:1013.500px;top:502.500px" width="5" height="3" viewBox="0 0 5 3"><path d="M0 0h5L2.500 3z" fill="#666"/></svg>
<!--/GRID-->

<!--BOTTOM-->
<div class="a" id="tabs" style="left:0;top:508.500px;width:1024px;height:21px;background:#e6e6e6;border-top:1px solid #c6c6c6;box-sizing:border-box;"></div>
<svg class="a" style="left:19px;top:515px" width="5" height="7" viewBox="0 0 5 7"><path d="M4.200 0.800v5.400L0.800 3.500z" fill="#217346"/></svg>
<svg class="a" style="left:41.500px;top:515px" width="5" height="7" viewBox="0 0 5 7"><path d="M0.800 0.800v5.400L4.200 3.500z" fill="#b0b0b0"/></svg>
<div class="t b" style="left:60px;top:513px;font-size:10px;color:#217346;letter-spacing:0.3px;">...</div>
<div class="a" style="left:75.500px;top:508.500px;width:74.500px;height:18.500px;background:linear-gradient(#ffffff 0%,#f4eefa 45%,#cdb7e6 100%);border-left:1px solid #c6c6c6;border-right:1px solid #c6c6c6;border-bottom:1.500px solid #217346;box-sizing:border-box;"></div>
<div class="t b" style="left:83.42px;top:513.47px;font-size:9.600px;color:#217346;letter-spacing:0.514px;">HD MUA VU</div>
<div class="a" style="left:152px;top:510.500px;width:64px;height:16.500px;background:#00b050;"></div>
<div class="t" style="left:159.03px;top:513.56px;font-size:9.5px;color:#000;letter-spacing:0.364px;">HD 1 NAM</div>
<div class="a" style="left:219.5px;top:510.500px;width:98.0px;height:16.500px;background:#ffc000;"></div>
<div class="t" style="left:228.93px;top:513.56px;font-size:9.5px;color:#000;letter-spacing:0.092px;">HD VO THOI HAN</div>
<div class="a" style="left:321.75px;top:510.500px;width:56.25px;height:16.500px;background:#7030a0;"></div>
<div class="t" style="left:330.43px;top:513.56px;font-size:9.5px;color:#fff;letter-spacing:-0.272px;">PL HĐLĐ</div>
<div class="a" style="left:381px;top:510.500px;width:79.75px;height:16.500px;background:#00b050;"></div>
<div class="t" style="left:388.93px;top:513.56px;font-size:9.5px;color:#000;letter-spacing:-0.176px;">BAN CAM KET</div>
<div class="a" style="left:464.5px;top:510.500px;width:96.75px;height:16.500px;background:#ffff00;"></div>
<div class="t" style="left:472.43px;top:513.56px;font-size:9.5px;color:#000;letter-spacing:0.068px;">QĐ TANG LUONG</div>
<div class="a" style="left:564.25px;top:510.500px;width:80.75px;height:16.500px;background:#ff0000;"></div>
<div class="t" style="left:571.93px;top:513.56px;font-size:9.5px;color:#fff;letter-spacing:-0.165px;">QĐ NGHI VIEC</div>
<div class="a" style="left:217.2px;top:510.500px;width:1px;height:16.500px;background:#bdbdbd;"></div>
<div class="a" style="left:319.2px;top:510.500px;width:1px;height:16.500px;background:#bdbdbd;"></div>
<div class="a" style="left:379.0px;top:510.500px;width:1px;height:16.500px;background:#bdbdbd;"></div>
<div class="a" style="left:462.0px;top:510.500px;width:1px;height:16.500px;background:#bdbdbd;"></div>
<div class="a" style="left:562.5px;top:510.500px;width:1px;height:16.500px;background:#bdbdbd;"></div>
<div class="a" style="left:646.0px;top:510.500px;width:1px;height:16.500px;background:#bdbdbd;"></div>
<svg class="a" style="left:671.500px;top:512.500px" width="12" height="12" viewBox="0 0 12 12"><circle cx="6" cy="6" r="5" fill="none" stroke="#777" stroke-width="1"/><path d="M6 3.200v5.600M3.200 6h5.600" stroke="#777" stroke-width="1"/></svg>
<div class="a" style="left:742px;top:515.200px;width:1.200px;height:1.200px;background:#a0a0a0;box-shadow:0 3.400px 0 #a0a0a0,0 6.800px 0 #a0a0a0;"></div>
<div class="a" style="left:755.500px;top:514px;width:253px;height:11px;background:#cdcdcd;"></div>
<div class="a" style="left:755.500px;top:514px;width:11px;height:11px;background:#fff;border:1px solid #ababab;box-sizing:border-box;"></div>
<svg class="a" style="left:759.500px;top:517px" width="3" height="5" viewBox="0 0 3 5"><path d="M3 0v5L0 2.500z" fill="#666"/></svg>
<div class="a" style="left:766px;top:514px;width:224.500px;height:11px;background:#fff;border:1px solid #ababab;box-sizing:border-box;"></div>
<div class="a" style="left:997px;top:514px;width:11px;height:11px;background:#fff;border:1px solid #ababab;box-sizing:border-box;"></div>
<svg class="a" style="left:1001.500px;top:517px" width="3" height="5" viewBox="0 0 3 5"><path d="M0 0v5L3 2.500z" fill="#666"/></svg>
<div class="a" id="status" style="left:0;top:529.500px;width:1024px;height:16.500px;background:#f3f3f3;"></div>
<svg class="a" style="left:6px;top:532px" width="11" height="11" viewBox="0 0 11 11"><circle cx="2.500" cy="2.500" r="2.200" fill="#666"/><path d="M1.500 4.500h9v6h-9z" fill="none" stroke="#707070" stroke-width="0.900"/><path d="M4.500 1.500h6v3" fill="none" stroke="#707070" stroke-width="0.900"/><path d="M3.500 7v3M5.500 7v3M7.500 7v3M9 7v3" stroke="#707070" stroke-width="0.900"/></svg>
<div class="a" style="left:799px;top:529.500px;width:30px;height:16.500px;background:#c8c8c8;"></div>
<svg class="a" style="left:809px;top:533px" width="11" height="10" viewBox="0 0 11 10"><path d="M0.500 0.500h10v9h-10zM0.500 3.500h10M0.500 6.500h10M3.800 0.500v9M7.200 0.500v9" fill="none" stroke="#707070" stroke-width="0.900"/></svg>
<svg class="a" style="left:839px;top:533px" width="11" height="10" viewBox="0 0 11 10"><path d="M0.500 0.500h10v9h-10z" fill="none" stroke="#707070" stroke-width="0.900"/><path d="M3 2.500h5v5H3z" fill="none" stroke="#707070" stroke-width="0.900"/><path d="M5 5h1.200" stroke="#666"/></svg>
<svg class="a" style="left:868px;top:532px" width="12" height="11" viewBox="0 0 12 11"><path d="M0.500 0.500h11v10h-11z" fill="none" stroke="#707070" stroke-width="0.900"/><path d="M4 0.500v5h4v-5" fill="none" stroke="#707070" stroke-width="0.900"/></svg>
<div class="a" style="left:893px;top:537.500px;width:6px;height:1px;background:#444;"></div>
<div class="a" style="left:903.500px;top:537.500px;width:74.500px;height:1px;background:#b0b0b0;"></div>
<div class="a" style="left:939px;top:533.500px;width:3.500px;height:8.500px;background:#666;"></div>
<div class="a" style="left:982px;top:537.500px;width:7px;height:1px;background:#444;"></div><div class="a" style="left:985px;top:534.500px;width:1px;height:7px;background:#444;"></div>
<div class="t ui" style="left:998px;top:533.500px;font-size:9px;letter-spacing:-0.5px;">100%</div>
<div class="a" id="taskbar" style="left:0;top:545.500px;width:1024px;height:7px;background:#1b1b1b;overflow:hidden;"><div class="a" style="left:404px;top:0;width:36px;height:7px;background:#3d3d3d;"></div><div class="a" style="left:1020.500px;top:0;width:1px;height:7px;background:#6a6a6a;"></div><div class="t" style="left:943px;top:4.300px;font-size:8.500px;color:#e8e8e8;">8:19 CH</div></div>
<!--/BOTTOM-->

</body></html>
